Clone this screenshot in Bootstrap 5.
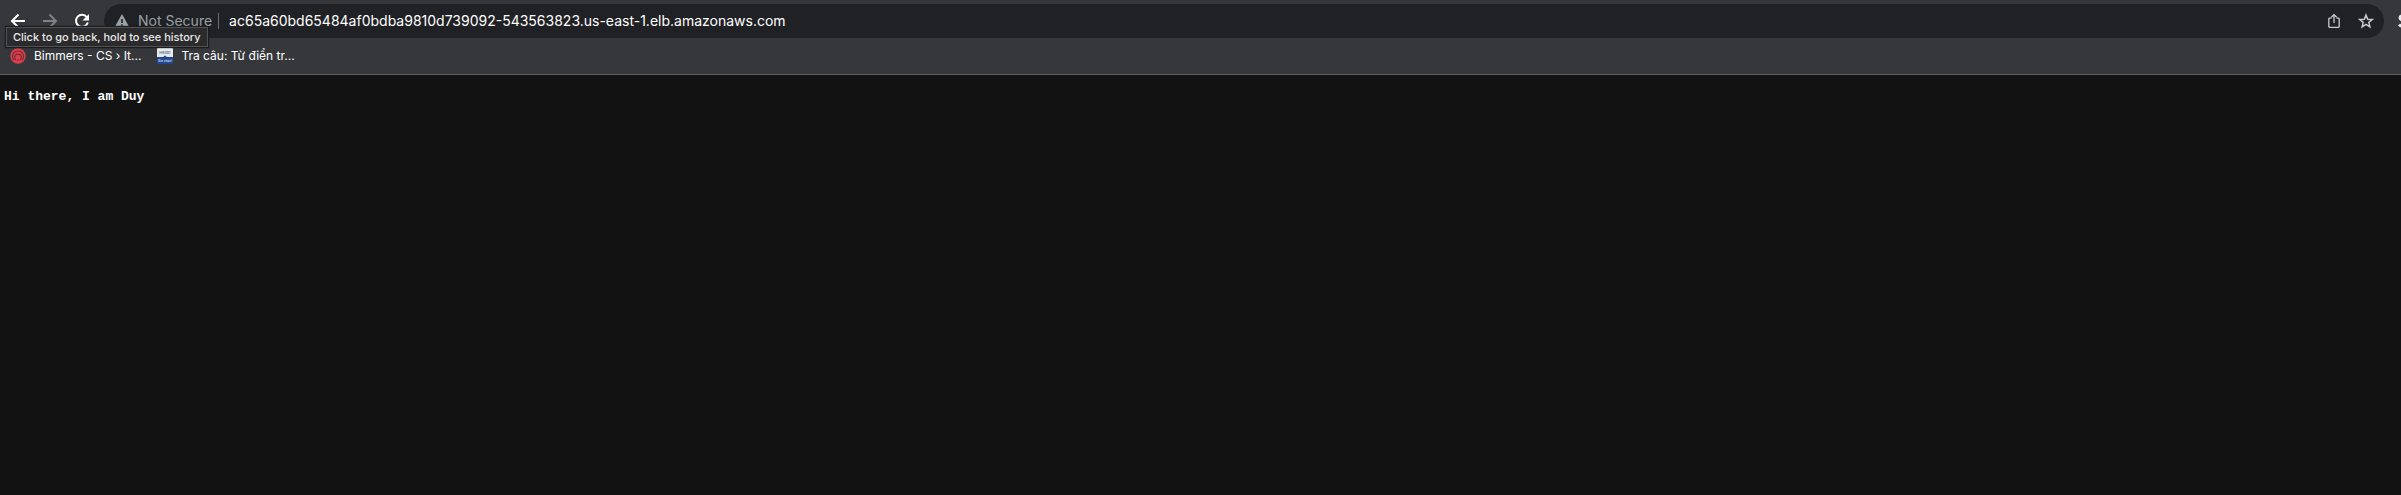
<!DOCTYPE html>
<html lang="en">
<head>
<meta charset="utf-8">
<meta name="viewport" content="width=device-width, initial-scale=1">
<title>Hi there</title>
<link href="https://cdn.jsdelivr.net/npm/bootstrap@5.3.0/dist/css/bootstrap.min.css" rel="stylesheet">
<style>
body { background: #121212; color: #fff; font-family: Inter, "Liberation Sans", sans-serif; }
.chrome { background: #36373b; border-bottom: 1px solid #5d5e61; }
.toolbar { padding: 4px 0 0 10px; height: 38px; }
.tool { width: 16px; height: 16px; color: #fff; line-height: 0; }
.tool:disabled { color: #808184; opacity: 1; border: 0; }
.tools { gap: 16px; margin-right: 14px; }
.omnibox { background: #202124; height: 34px; padding: 0 10px; font-size: 14px; line-height: 20px; }
.warn { color: #9aa0a6; gap: 8px; }
.divider { width: 1px; height: 16px; background: #6b6d71; margin: 0 10px 0 6px; }
.address { background: transparent; border: 0; outline: 0; color: #fff; padding: 0; min-width: 0; }
.actions { gap: 16px; }
.actions .tool { color: #c8cacd; }
.ext { width: 17px; height: 34px; padding-left: 14px; color: #e8eaed; }
.bookmarks { height: 36px; gap: 16px; padding: 0 10px; font-size: 12px; line-height: 16px; }
.bookmarks a { color: #fff; gap: 8px; }
.tip { left: 6px; top: 27px; z-index: 2; background: #2b2b2d; border: 1px solid #505153; box-shadow: 0 0 1px 1px #1c1c1e; color: #e8e8e8; font-size: 11px; line-height: 18px; padding: 0 6px; font-weight: 500; white-space: nowrap; }
.greeting { font: bold 13px/16px "Liberation Mono", monospace; margin: 0; padding: 14px 4px; }
</style>
</head>
<body>
<header class="chrome position-relative">
  <div class="toolbar d-flex align-items-center overflow-hidden">
    <div class="tools d-flex align-items-center flex-shrink-0">
      <button class="tool btn p-0 border-0" type="button" aria-label="Back" aria-describedby="back-tip"><svg width="16" height="16" viewBox="0 0 16 16" fill="none" stroke="currentColor" stroke-width="2"><path d="M15 8H2.500M8.500 1.500 2 8l6.500 6.500"/></svg></button>
      <button class="tool btn p-0 border-0" type="button" aria-label="Forward" disabled><svg width="16" height="16" viewBox="0 0 16 16" fill="none" stroke="currentColor" stroke-width="2"><path d="M1 8h12.500M7.500 1.500 14 8l-6.500 6.500"/></svg></button>
      <button class="tool btn p-0 border-0" type="button" aria-label="Reload"><svg width="16" height="16" viewBox="0 0 16 16"><path d="M12.800 4.200A6 6 0 1 0 13.800 9.500" fill="none" stroke="currentColor" stroke-width="2"/><path d="M15 1v6.500H8.500z" fill="currentColor"/></svg></button>
    </div>
    <div class="omnibox rounded-pill d-flex align-items-center flex-grow-1">
      <div class="warn d-flex align-items-center flex-shrink-0">
        <svg width="16" height="16" viewBox="0 0 16 16"><path d="M8 1 15.500 14.500H.5z" fill="currentColor"/><path d="M7.200 6h1.600v4H7.200zM7.200 11.200h1.600v1.600H7.200z" fill="#202124"/></svg>
        <label for="address">Not Secure</label>
      </div>
      <div class="divider"></div>
      <input class="address flex-grow-1" id="address" type="text" spellcheck="false" value="ac65a60bd65484af0bdba9810d739092-543563823.us-east-1.elb.amazonaws.com">
      <div class="actions d-flex">
        <button class="tool btn p-0 border-0" type="button" aria-label="Share"><svg width="16" height="16" viewBox="0 0 16 16" fill="none" stroke="currentColor" stroke-width="1.300"><path d="M5.500 5.200H3.600a.8.800 0 0 0-.8.800v7.500a.8.800 0 0 0 .8.800h8.800a.8.800 0 0 0 .8-.8V6a.8.800 0 0 0-.8-.8h-1.900M8 10V1.800M5.300 4.300 8 1.600l2.700 2.700"/></svg></button>
        <button class="tool btn p-0 border-0" type="button" aria-label="Bookmark this tab"><svg width="16" height="16" viewBox="0 0 16 16" fill="none" stroke="currentColor" stroke-width="1.500"><path d="m8 2 1.700 4.200 4.600.3-3.500 2.900 1.100 4.400L8 11.400l-3.900 2.400 1.100-4.400-3.500-2.900 4.600-.3z"/></svg></button>
      </div>
    </div>
    <div class="ext flex-shrink-0 overflow-hidden d-flex align-items-center"><svg class="flex-shrink-0" width="12" height="14" viewBox="0 0 12 14" fill="none" stroke="currentColor" stroke-width="3"><path d="M10 3.500C8 1 2 1 2 4s8 3 8 6-6 3.500-9 .5"/></svg></div>
  </div>
  <div class="tip position-absolute" id="back-tip" role="tooltip">Click to go back, hold to see history</div>
  <nav class="bookmarks d-flex align-items-center" aria-label="Bookmarks">
    <a href="#" class="d-flex align-items-center text-decoration-none">
      <svg width="16" height="16" viewBox="0 0 16 16"><circle cx="8" cy="8" r="7.700" fill="#dc3f4c"/><g fill="none" stroke="#722b35" stroke-width="1.100"><path d="M4 12.200a5.500 5.500 0 1 1 8 0M6 12a3.300 3.300 0 1 1 4 0"/></g><path d="M6.500 12.500a1.600 1.600 0 0 1 3 0z" fill="#722b35"/></svg>
      <span>Bimmers - CS › It...</span>
    </a>
    <a href="#" class="d-flex align-items-center text-decoration-none">
      <svg width="16" height="16" viewBox="0 0 16 16"><path d="M1 0h14a1 1 0 0 1 1 1v8H0V1a1 1 0 0 1 1-1z" fill="#e4eaf0"/><path d="M0 9h6l2-1.500L10 9h6v6a1 1 0 0 1-1 1H1a1 1 0 0 1-1-1z" fill="#23458f"/><text x="8" y="6" font-size="4" font-weight="700" text-anchor="middle" fill="#747b86">Hello!</text><text x="8" y="14" font-size="3" font-weight="700" text-anchor="middle" fill="#c3d0ea">Xin chào!</text></svg>
      <span>Tra câu: Từ điển tr...</span>
    </a>
  </nav>
</header>
<main><pre class="greeting">Hi there, I am Duy</pre></main>
<script src="https://cdn.jsdelivr.net/npm/bootstrap@5.3.0/dist/js/bootstrap.bundle.min.js"></script>
</body>
</html>
